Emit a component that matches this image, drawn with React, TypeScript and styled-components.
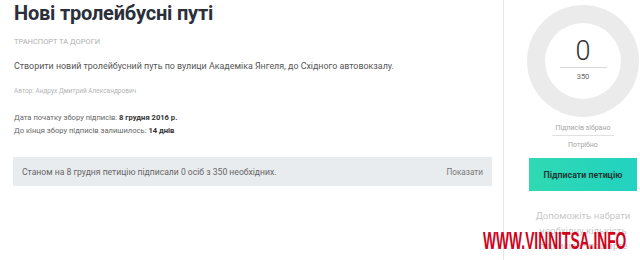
import React from "react";
import styled, { createGlobalStyle } from "styled-components";

const Global = createGlobalStyle`
  html, body { margin: 0; padding: 0; background: #fff; }
  body { font-family: Roboto, "Liberation Sans", sans-serif; width: 640px; height: 260px; overflow: hidden; }
`;

const Page = styled.div`
  position: relative;
  display: flex;
  width: 640px;
  height: 260px;
  overflow: hidden;
`;

const Main = styled.div`
  width: 479px;
  padding: 0 11px 0 13px;
  border-right: 1px solid #e6e6e6;
  display: flex;
  flex-direction: column;
`;

const Title = styled.h1`
  margin: 0;
  padding: 1px 0 0 1px;
  font-size: 20px;
  letter-spacing: -0.2px;
  line-height: 24px;
  font-weight: 700;
  color: #2a2f3a;
`;

const Category = styled.div`
  margin-top: 12px;
  padding-left: 1px;
  font-size: 7.5px;
  line-height: 10px;
  color: #b0b0b0;
  text-transform: uppercase;
`;

const Description = styled.p`
  margin: 13px 0 0;
  padding-left: 1px;
  font-size: 8.9px;
  line-height: 12px;
  color: #555;
`;

const Author = styled.div`
  margin-top: 14px;
  padding-left: 1px;
  font-size: 6.5px;
  line-height: 10px;
  color: #b5b5b5;
`;

const Dates = styled.div`
  margin-top: 16px;
  padding-left: 1px;
  display: flex;
  flex-direction: column;
  gap: 2px;
`;

const DateLine = styled.div`
  font-size: 7.6px;
  line-height: 11px;
  color: #666;
  b { color: #333; font-weight: 700; }
`;

const StatusBox = styled.div`
  margin-top: 21px;
  height: 29px;
  background: #e9ecef;
  display: flex;
  align-items: center;
  justify-content: space-between;
  padding: 0 9px 0 9px;
`;

const StatusText = styled.span`
  font-size: 8.6px;
  color: #666;
`;

const ShowLink = styled.span`
  font-size: 8.2px;
  color: #777;
`;

const Side = styled.div`
  flex: 1;
  padding-left: 23px;
  display: flex;
  flex-direction: column;
  align-items: flex-start;
`;

const SideInner = styled.div`
  width: 112px;
  display: flex;
  flex-direction: column;
  align-items: center;
`;

const Ring = styled.div`
  margin-top: 5px;
  width: 112px;
  height: 112px;
  border-radius: 50%;
  background: #ebebeb;
  display: flex;
  align-items: center;
  justify-content: center;
`;

const RingInner = styled.div`
  width: 76px;
  height: 76px;
  border-radius: 50%;
  background: #fff;
  display: flex;
  flex-direction: column;
  align-items: center;
  justify-content: flex-start;
`;

const Count = styled.div`
  margin-top: 15px;
  font-size: 27px;
  line-height: 26px;
  font-weight: 300;
  color: #333;
`;

const Divider = styled.div`
  width: 47px;
  height: 1px;
  background: #d8d8d8;
  margin-top: 3px;
`;

const Needed = styled.div`
  margin-top: 4px;
  font-size: 7.5px;
  color: #666;
`;

const Collected = styled.div`
  margin-top: 6px;
  font-size: 7px;
  line-height: 10px;
  color: #a5a5a5;
  padding: 0 4px 2px;
  border-bottom: 1px solid #e0e0e0;
`;

const Required = styled.div`
  margin-top: 4px;
  font-size: 7px;
  line-height: 10px;
  color: #a5a5a5;
`;

const SignButton = styled.button`
  margin-top: 8px;
  width: 108px;
  height: 33px;
  border: none;
  background: linear-gradient(90deg, #2fd9b2 0%, #22d2c0 100%);
  font-family: Roboto, "Liberation Sans", sans-serif;
  font-size: 8.8px;
  font-weight: 700;
  color: #1c3a36;
  cursor: pointer;
`;

const Help = styled.div`
  margin-top: 17px;
  text-align: center;
  font-size: 9.6px;
  line-height: 15px;
  color: #c8c8c8;
`;

const Watermark = styled.div`
  position: absolute;
  left: 483px;
  top: 229px;
  font-family: "Liberation Sans", sans-serif;
  font-weight: 700;
  font-size: 23px;
  line-height: 24px;
  color: #d0021b;
  white-space: nowrap;
  transform: scaleX(0.6);
  transform-origin: left center;
`;

export default function App() {
  return (
    <>
      <Global />
      <Page>
        <Main>
          <Title>Нові тролейбусні путі</Title>
          <Category>Транспорт та дороги</Category>
          <Description>
            Створити новий тролейбусний путь по вулици Академіка Янгеля, до Східного автовокзалу.
          </Description>
          <Author>Автор: Андрух Дмитрий Александрович</Author>
          <Dates>
            <DateLine>
              Дата початку збору підписів: <b>8 грудня 2016 р.</b>
            </DateLine>
            <DateLine>
              До кінця збору підписів залишилось: <b>14 днів</b>
            </DateLine>
          </Dates>
          <StatusBox>
            <StatusText>Станом на 8 грудня петицію підписали 0 осіб з 350 необхідних.</StatusText>
            <ShowLink>Показати</ShowLink>
          </StatusBox>
        </Main>
        <Side>
          <SideInner>
            <Ring>
              <RingInner>
                <Count>0</Count>
                <Divider />
                <Needed>350</Needed>
              </RingInner>
            </Ring>
            <Collected>Підписів зібрано</Collected>
            <Required>Потрібно</Required>
            <SignButton>Підписати петицію</SignButton>
            <Help>
              Допоможіть набрати
              <br />
              необхідну кількість
              <br />
              підписів — поширте
            </Help>
          </SideInner>
        </Side>
        <Watermark>WWW.VINNITSA.INFO</Watermark>
      </Page>
    </>
  );
}
